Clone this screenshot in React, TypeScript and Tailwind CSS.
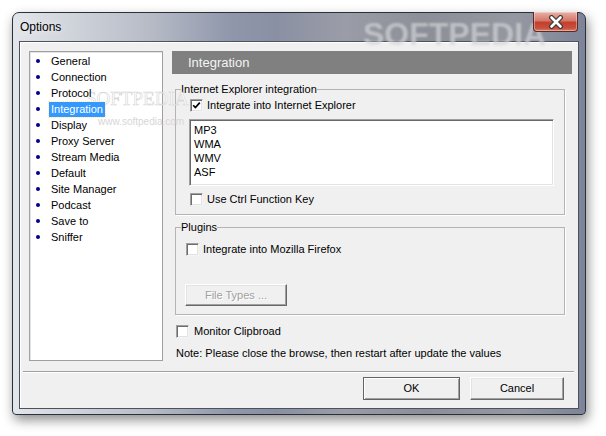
import React from "react";

const NAV = [
  "General",
  "Connection",
  "Protocol",
  "Integration",
  "Display",
  "Proxy Server",
  "Stream Media",
  "Default",
  "Site Manager",
  "Podcast",
  "Save to",
  "Sniffer",
];

const FORMATS = ["MP3", "WMA", "WMV", "ASF"];

function CheckBox({ checked = false }: { checked?: boolean }) {
  return (
    <span className="flex h-[13px] w-[13px] shrink-0 items-center justify-center border border-t-[#a0a0a0] border-l-[#a0a0a0] border-r-[#f4f4f4] border-b-[#f4f4f4] bg-white shadow-[inset_1px_1px_0_#6d6d6d,inset_-1px_-1px_0_#e3e3e3]">
      {checked && (
        <svg width="9" height="9" viewBox="0 0 9 9">
          <path d="M1.2 4.2 L3.4 6.6 L7.8 1.6" stroke="#000" strokeWidth="1.7" fill="none" />
        </svg>
      )}
    </span>
  );
}

function Button({
  label,
  isDefault = false,
  disabled = false,
  className = "",
}: {
  label: string;
  isDefault?: boolean;
  disabled?: boolean;
  className?: string;
}) {
  return (
    <button
      className={`flex items-center justify-center bg-[#f0f0f0] text-[11px] leading-[13px] ${
        isDefault
          ? "border border-[#646464] shadow-[inset_1px_1px_0_#ffffff,inset_-1px_-1px_0_#a0a0a0]"
          : "border border-t-[#ffffff] border-l-[#ffffff] border-r-[#696969] border-b-[#696969] shadow-[inset_-1px_-1px_0_#a0a0a0,inset_1px_1px_0_#e3e3e3]"
      } ${disabled ? "text-[#a0a0a0] [text-shadow:1px_1px_0_#ffffff]" : "text-black"} ${className}`}
    >
      {label}
    </button>
  );
}

export default function App() {
  return (
    <div className="relative h-[436px] w-[606px] overflow-hidden bg-white font-['Liberation_Sans',Arial,sans-serif] text-black">
      {/* window */}
      <div className="relative ml-[12px] mt-[12px] flex h-[403px] w-[574px] flex-col rounded-t-[7px] rounded-b-[4px] border border-[#2c3038] bg-[linear-gradient(90deg,#e2e5ea_0%,#d0d4db_10%,#b6bbc6_24%,#9097ab_38%,#8a90a3_46%,#9a9da7_58%,#8c8f97_72%,#9598a1_88%,#7d8499_100%)] px-[6px] pb-[5px] shadow-[2px_5px_12px_rgba(0,0,0,0.45)]">
        {/* title bar */}
        <div className="relative flex h-[28px] shrink-0 items-center">
          <span className="ml-[1px] mt-[-1px] text-[12px] text-black [text-shadow:0_0_8px_rgba(255,255,255,0.9)]">
            Options
          </span>
          <span className="absolute left-[344px] top-[-3px] text-[32px] font-bold text-[#d2d3d6]/70 blur-[0.8px]">
            SOFTPEDIA
          </span>
          <div className="absolute right-[1px] top-[-1px] flex h-[20px] w-[45px] items-center justify-center rounded-b-[4px] border border-t-0 border-[#5b2a24] bg-[linear-gradient(180deg,#e8b1a6_0%,#d7786a_45%,#c2402e_55%,#c9503a_85%,#d9826e_100%)] shadow-[inset_0_0_0_1px_rgba(255,255,255,0.35)]">
            <svg width="16" height="14" viewBox="0 0 16 14">
              <path d="M3.5 2.5 L12.5 11.5 M12.5 2.5 L3.5 11.5" stroke="#3b3b3b" strokeWidth="5" strokeLinecap="round" />
              <path d="M3.5 2.5 L12.5 11.5 M12.5 2.5 L3.5 11.5" stroke="#ffffff" strokeWidth="2.6" strokeLinecap="round" />
            </svg>
          </div>
        </div>

        {/* client area */}
        <div className="flex flex-1 flex-col border border-[#4c525c] bg-[#f0f0f0] shadow-[inset_1px_1px_0_#ffffff]">
          <div className="flex h-[319px] shrink-0 pl-[9px] pt-[9px]">
            {/* tree */}
            <div className="relative z-10 h-[310px] w-[134px] shrink-0 border border-[#a0a0a0] bg-white pt-[1px] shadow-[inset_1px_1px_0_#e3e3e3]">
              <span className="pointer-events-none absolute left-[56px] top-[37px] font-['Liberation_Serif',serif] text-[19px] leading-[20px] text-white/80 [-webkit-text-stroke:0.6px_#d6d6d6]">
                SOFTPEDIA
              </span>
              <span className="pointer-events-none absolute left-[68px] top-[64px] text-[10px] leading-[12px] text-[#d6d6d6]">
                www.softpedia.com
              </span>
              {NAV.map((item) => {
                const sel = item === "Integration";
                return (
                  <div key={item} className="relative flex h-[16px] items-center pl-[6px]">
                    <span className="h-[4px] w-[4px] shrink-0 rounded-full bg-[#00008b]" />
                    <span
                      className={`ml-[9px] flex h-[15px] items-center px-[2px] text-[11px] leading-[13px] ${
                        sel ? "bg-[#3399ff] text-white outline outline-1 outline-dotted outline-[#ffe8a8]" : ""
                      }`}
                    >
                      {item}
                    </span>
                  </div>
                );
              })}
            </div>

            {/* right panel */}
            <div className="ml-[9px] flex w-[400px] flex-col">
              <div className="flex h-[23px] shrink-0 items-center bg-[#808080] pl-[16px] text-[13px] text-[#f4f4f4]">
                Integration
              </div>

              <fieldset className="ml-[3px] mt-[9px] w-[390px] border border-[#b4b4b4] pb-[8px] shadow-[1px_1px_0_#ffffff]">
                <legend className="ml-[5px] text-[11px] leading-[13px]">Internet Explorer integration</legend>
                <div className="ml-[14px] mt-[3px] flex items-center gap-[4px] text-[11px] leading-[13px]">
                  <CheckBox checked />
                  <span>Integrate into Internet Explorer</span>
                </div>
                <div className="ml-[13px] mt-[7px] h-[67px] w-[365px] border border-t-[#a0a0a0] border-l-[#a0a0a0] border-r-[#ffffff] border-b-[#ffffff] bg-white pl-[4px] pt-[3px] shadow-[inset_1px_1px_0_#696969,inset_-1px_-1px_0_#e3e3e3] text-[11px] leading-[14px]">
                  {FORMATS.map((f) => (
                    <div key={f}>{f}</div>
                  ))}
                </div>
                <div className="ml-[14px] mt-[7px] flex items-center gap-[4px] text-[11px] leading-[13px]">
                  <CheckBox />
                  <span>Use Ctrl Function Key</span>
                </div>
              </fieldset>

              <fieldset className="ml-[3px] mt-[6px] w-[390px] border border-[#b4b4b4] pb-[8px] shadow-[1px_1px_0_#ffffff]">
                <legend className="ml-[5px] text-[11px] leading-[13px]">Plugins</legend>
                <div className="ml-[10px] mt-[9px] flex items-center gap-[4px] text-[11px] leading-[13px]">
                  <CheckBox />
                  <span>Integrate into Mozilla Firefox</span>
                </div>
                <Button label="File Types ..." disabled className="ml-[9px] mt-[28px] h-[22px] w-[102px]" />
              </fieldset>

              <div className="ml-[4px] mt-[10px] flex items-center gap-[5px] text-[11px] leading-[13px]">
                <CheckBox />
                <span>Monitor Clipbroad</span>
              </div>
              <div className="ml-[4px] mt-[9px] text-[11px] leading-[13px]">
                Note: Please close the browse, then restart after update the values
              </div>
            </div>
          </div>

          <div className="ml-[3px] mr-[4px] mt-[10px] h-[2px] shrink-0 border-t border-b border-t-[#a0a0a0] border-b-[#ffffff]" />

          <div className="mr-[14px] mt-[4px] flex justify-end gap-[10px]">
            <Button label="OK" isDefault className="h-[23px] w-[97px]" />
            <Button label="Cancel" className="h-[23px] w-[94px]" />
          </div>
        </div>
      </div>
    </div>
  );
}
